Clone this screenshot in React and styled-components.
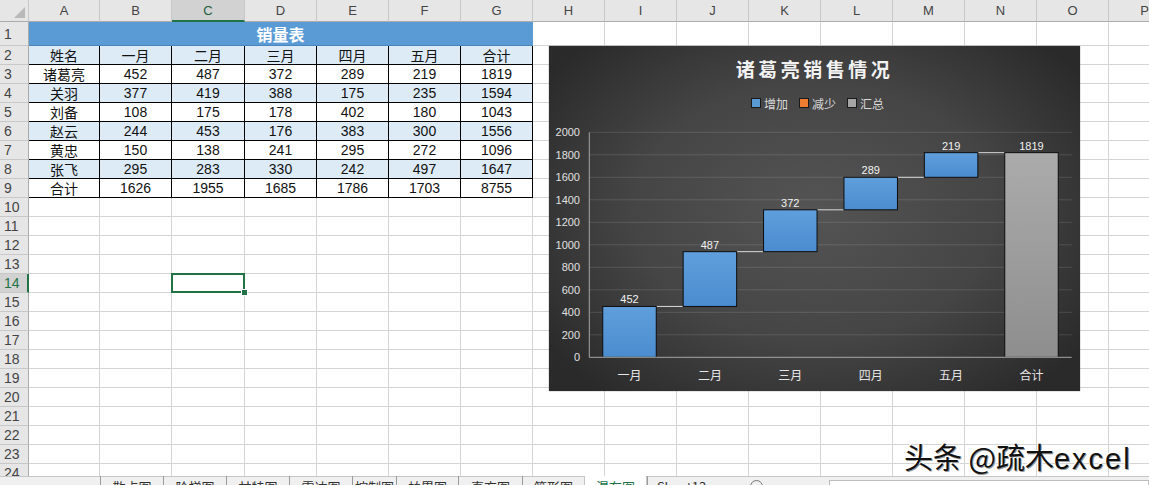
import styled, { createGlobalStyle, css } from 'styled-components';

const GlobalStyle = createGlobalStyle`
  html, body {
    margin: 0;
    padding: 0;
    background: #ffffff;
    overflow: hidden;
  }
  body {
    font-family: "Liberation Sans", "Noto Sans CJK SC", sans-serif;
  }
`;

const colLetters = 'ABCDEFGHIJKLMNOP'.split('');
const colWidths = [71, 72, 73, 72, 72, 72, 72, 72, 72, 72, 72, 72, 72, 72, 72, 72];
const ROW_COUNT = 24;

const table = [
  ['姓名', '一月', '二月', '三月', '四月', '五月', '合计'],
  ['诸葛亮', '452', '487', '372', '289', '219', '1819'],
  ['关羽', '377', '419', '388', '175', '235', '1594'],
  ['刘备', '108', '175', '178', '402', '180', '1043'],
  ['赵云', '244', '453', '176', '383', '300', '1556'],
  ['黄忠', '150', '138', '241', '295', '272', '1096'],
  ['张飞', '295', '283', '330', '242', '497', '1647'],
  ['合计', '1626', '1955', '1685', '1786', '1703', '8755'],
];

const Sheet = styled.div`
  position: relative;
  width: 1149px;
  height: 485px;
  overflow: hidden;
  display: flex;
  flex-direction: column;
`;

const Grid = styled.div`
  display: grid;
  grid-template-columns: 29px ${colWidths.map((w) => w + 'px').join(' ')};
  grid-template-rows: 22px 24px repeat(${ROW_COUNT - 1}, 19px);
  height: 476px;
  flex: none;
  overflow: hidden;
`;

const Corner = styled.div`
  position: relative;
  background: #e6e6e6;
  border-right: 1px solid #c8c8c8;
  border-bottom: 1px solid #ababab;
  box-sizing: border-box;
  &::after {
    content: '';
    position: absolute;
    right: 3px;
    bottom: 3px;
    border-left: 11px solid transparent;
    border-bottom: 11px solid #b9b9b9;
  }
`;

const ColHead = styled.div`
  background: ${(p) => (p.$active ? '#d2d2d2' : '#e6e6e6')};
  border-right: 1px solid #c8c8c8;
  border-bottom: ${(p) => (p.$active ? '2px solid #217346' : '1px solid #ababab')};
  box-sizing: border-box;
  display: flex;
  align-items: center;
  justify-content: center;
  font-size: 13px;
  color: ${(p) => (p.$active ? '#1d5f3a' : '#444')};
`;

const RowHead = styled.div`
  background: ${(p) => (p.$active ? '#d2d2d2' : '#e6e6e6')};
  border-right: ${(p) => (p.$active ? '2px solid #217346' : '1px solid #ababab')};
  border-bottom: 1px solid #c8c8c8;
  box-sizing: border-box;
  display: flex;
  align-items: center;
  padding-left: 4px;
  font-size: 14px;
  color: ${(p) => (p.$active ? '#217346' : '#444')};
`;

const Cell = styled.div`
  position: relative;
  box-sizing: border-box;
  background: ${(p) => p.$bg || '#ffffff'};
  border-right: 1px solid ${(p) => (p.$dark ? '#000' : '#d4d4d4')};
  border-bottom: 1px solid ${(p) => (p.$dark ? '#000' : '#d4d4d4')};
  display: flex;
  align-items: center;
  justify-content: center;
  font-size: 14px;
  color: #111;
  white-space: nowrap;
  ${(p) =>
    p.$selected &&
    css`
      &::after {
        content: '';
        position: absolute;
        left: -1px;
        top: -1px;
        right: -1px;
        bottom: -1px;
        border: 2px solid #217346;
        z-index: 2;
      }
      &::before {
        content: '';
        position: absolute;
        right: -4px;
        bottom: -4px;
        width: 5px;
        height: 5px;
        background: #217346;
        border: 1px solid #fff;
        z-index: 3;
      }
    `}
`;

const TitleCell = styled(Cell)`
  grid-column: span 7;
  background: #5b9bd5;
  border-right: 1px solid #5b9bd5;
  border-bottom: 1px solid #4a86bd;
  color: #ffffff;
  font-weight: bold;
  font-size: 16px;
  font-family: "Noto Sans CJK SC", sans-serif;
`;

const TabBar = styled.div`
  flex: none;
  height: 24px;
  display: flex;
  align-items: flex-start;
  background: #f0f0f0;
  border-top: 1px solid #c6c6c6;
  box-sizing: border-box;
  padding-left: 100px;
`;

const Tab = styled.div`
  width: ${(p) => p.$w}px;
  box-sizing: border-box;
  text-align: center;
  font-size: 13px;
  line-height: 18px;
  padding-top: 2px;
  margin-top: -1px;
  font-family: "Noto Sans CJK SC", sans-serif;
  border-left: 1px solid #9b9b9b;
  color: #333;
  ${(p) =>
    p.$active &&
    css`
      background: #ffffff;
      color: #217346;
      border-left: 1px solid #c6c6c6;
      border-right: 1px solid #c6c6c6;
    `}
`;

const AddSheet = styled.div`
  margin-left: 35px;
  margin-top: 3px;
  width: 13px;
  height: 13px;
  border: 1px solid #777;
  border-radius: 50%;
  box-sizing: border-box;
`;

const Scroller = styled.div`
  margin-left: 66px;
  margin-top: 3px;
  flex: 1;
  height: 14px;
  border: 1px solid #bdbdbd;
  background: #ffffff;
`;

/* floating chart */
const Chart = styled.div`
  position: absolute;
  left: 549px;
  top: 46px;
  width: 531px;
  height: 345px;
  display: flex;
  flex-direction: column;
  background: radial-gradient(ellipse 62% 68% at 50% 48%, #545454 0%, #454545 55%, #2a2a2a 100%);
  box-shadow: 0 0 1px rgba(0, 0, 0, 0.6);
  font-family: "Liberation Sans", "Noto Sans CJK SC", sans-serif;
`;

const ChartTitle = styled.div`
  height: 44px;
  display: flex;
  align-items: center;
  justify-content: center;
  font-family: "Noto Sans CJK SC", sans-serif;
  font-size: 19px;
  font-weight: bold;
  letter-spacing: 3.5px;
  color: #f2f2f2;
`;

const Legend = styled.div`
  height: 26px;
  display: flex;
  align-items: center;
  justify-content: center;
  gap: 11px;
  padding-left: 6px;
`;

const LegendItem = styled.div`
  display: flex;
  align-items: center;
  gap: 3px;
  font-family: "Noto Sans CJK SC", sans-serif;
  font-size: 12px;
  color: #d9d9d9;
`;

const Swatch = styled.span`
  width: 8px;
  height: 8px;
  background: ${(p) => p.$color};
  border: 1px solid #1a1a1a;
`;

const Plot = styled.svg`
  display: block;
  flex: none;
`;

const Watermark = styled.div`
  position: absolute;
  left: 904px;
  top: 435px;
  font-family: "Noto Sans CJK SC", sans-serif;
  font-size: 29px;
  color: #111;
  text-shadow: -1px -1px 0 #fff, 1px 1px 0 #9a9a9a, 2px 2px 1px rgba(255, 255, 255, 0.8);
  z-index: 5;
`;

const Latin = styled.span`
  font-family: "Liberation Sans", sans-serif;
  letter-spacing: 2px;
`;

const months = ['一月', '二月', '三月', '四月', '五月', '合计'];
const values = [452, 487, 372, 289, 219];

function WaterfallPlot() {
  const W = 531;
  const H = 275;
  const x0 = 40.3;
  const x1 = 522.7;
  const yOf = (v) => 241.3 - v * 0.1125;
  const step = (x1 - x0) / 6;
  const bw = 53.5;

  const bars = [];
  let acc = 0;
  values.forEach((v, i) => {
    bars.push({ from: acc, to: acc + v, label: String(v), kind: 'up', i });
    acc += v;
  });
  bars.push({ from: 0, to: acc, label: String(acc), kind: 'total', i: 5 });

  const ticks = [];
  for (let t = 0; t <= 2000; t += 200) ticks.push(t);

  return (
    <Plot width={W} height={H} viewBox={`0 0 ${W} ${H}`}>
      <defs>
        <linearGradient id="blueFill" x1="0" y1="0" x2="0" y2="1">
          <stop offset="0" stopColor="#609fdc" />
          <stop offset="1" stopColor="#4a8ccf" />
        </linearGradient>
        <linearGradient id="grayFill" x1="0" y1="0" x2="0" y2="1">
          <stop offset="0" stopColor="#ababab" />
          <stop offset="1" stopColor="#8e8e8e" />
        </linearGradient>
      </defs>
      {ticks.map((t) => (
        <g key={t}>
          {t > 0 && (
            <line x1={x0} x2={x1} y1={yOf(t)} y2={yOf(t)} stroke="rgba(255,255,255,0.13)" strokeWidth="1" />
          )}
          <text
            x="31"
            y={yOf(t) + 4}
            textAnchor="end"
            fontSize="11"
            fill="#e0e0e0"
            fontFamily="Liberation Sans, sans-serif"
          >
            {t}
          </text>
        </g>
      ))}
      <line x1={x0} x2={x0} y1={yOf(2000)} y2={yOf(0)} stroke="#a6a6a6" strokeWidth="1" />
      {bars.slice(0, 5).map((b) => {
        const xa = x0 + b.i * step + (step - bw) / 2 + bw;
        const xb = x0 + (b.i + 1) * step + (step - bw) / 2;
        return (
          <line key={'c' + b.i} x1={xa} x2={xb} y1={yOf(b.to)} y2={yOf(b.to)} stroke="#d9d9d9" strokeWidth="1" />
        );
      })}
      {bars.map((b) => {
        const x = x0 + b.i * step + (step - bw) / 2;
        const yt = yOf(b.to);
        const yb = yOf(b.from);
        return (
          <g key={b.i}>
            <rect
              x={x}
              y={yt}
              width={bw}
              height={yb - yt}
              fill={b.kind === 'total' ? 'url(#grayFill)' : 'url(#blueFill)'}
              stroke="#0d0d0d"
              strokeWidth="1"
            />
            <text
              x={x + bw / 2}
              y={yt - 3}
              textAnchor="middle"
              fontSize="11"
              fill="#f2f2f2"
              fontFamily="Liberation Sans, sans-serif"
            >
              {b.label}
            </text>
            <text
              x={x + bw / 2}
              y="263.5"
              textAnchor="middle"
              fontSize="12"
              fill="#e6e6e6"
              fontFamily="Noto Sans CJK SC, sans-serif"
            >
              {months[b.i]}
            </text>
          </g>
        );
      })}
      <line x1={x0} x2={x1} y1={yOf(0)} y2={yOf(0)} stroke="#a6a6a6" strokeWidth="1" />
    </Plot>
  );
}

const tabs = [
  { name: '散点图', w: 63 },
  { name: '阶梯图', w: 63 },
  { name: '甘特图', w: 63 },
  { name: '雷达图', w: 63 },
  { name: '控制图', w: 44 },
  { name: '帕累图', w: 62 },
  { name: '直方图', w: 64 },
  { name: '箱形图', w: 62 },
  { name: '瀑布图', w: 63, active: true },
  { name: 'Sheet13', w: 68 },
];

function renderRow(r) {
  const cells = [];
  const activeRow = r === 14;
  cells.push(
    <RowHead key={'h' + r} $active={activeRow}>
      {r}
    </RowHead>
  );
  if (r === 1) {
    cells.push(<TitleCell key="title">销量表</TitleCell>);
    for (let c = 7; c < colLetters.length; c++) cells.push(<Cell key={r + '-' + c} />);
    return cells;
  }
  for (let c = 0; c < colLetters.length; c++) {
    const inTable = r >= 2 && r <= 9 && c <= 6;
    const text = inTable ? table[r - 2][c] : '';
    const bg = inTable && r % 2 === 0 ? '#ddebf7' : '#ffffff';
    cells.push(
      <Cell key={r + '-' + c} $dark={inTable} $bg={bg} $selected={r === 14 && c === 2}>
        {text}
      </Cell>
    );
  }
  return cells;
}

export default function App() {
  const rows = [];
  for (let r = 1; r <= ROW_COUNT; r++) rows.push(...renderRow(r));

  return (
    <Sheet>
      <GlobalStyle />
      <Grid>
        <Corner />
        {colLetters.map((l) => (
          <ColHead key={l} $active={l === 'C'}>
            {l}
          </ColHead>
        ))}
        {rows}
      </Grid>
      <TabBar>
        {tabs.map((t) => (
          <Tab key={t.name} $w={t.w} $active={t.active}>
            {t.name}
          </Tab>
        ))}
        <AddSheet />
        <Scroller />
      </TabBar>

      <Chart>
        <ChartTitle>诸葛亮销售情况</ChartTitle>
        <Legend>
          <LegendItem>
            <Swatch $color="#5b9bd5" />
            增加
          </LegendItem>
          <LegendItem>
            <Swatch $color="#ed7d31" />
            减少
          </LegendItem>
          <LegendItem>
            <Swatch $color="#a5a5a5" />
            汇总
          </LegendItem>
        </Legend>
        <WaterfallPlot />
      </Chart>

      <Watermark>
        头条 @疏木<Latin>excel</Latin>
      </Watermark>
    </Sheet>
  );
}
